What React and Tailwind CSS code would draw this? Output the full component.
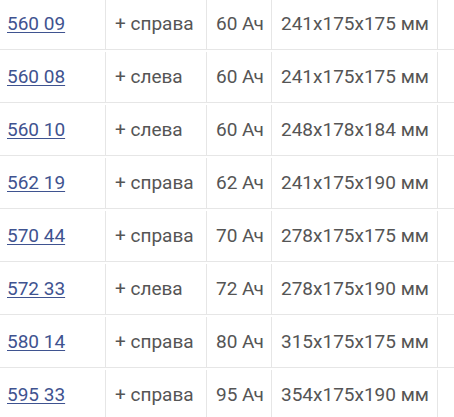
const rows = [
  ['560 09', '+ справа', '60 Ач', '241x175x175 мм'],
  ['560 08', '+ слева', '60 Ач', '241x175x175 мм'],
  ['560 10', '+ слева', '60 Ач', '248x178x184 мм'],
  ['562 19', '+ справа', '62 Ач', '241x175x190 мм'],
  ['570 44', '+ справа', '70 Ач', '278x175x175 мм'],
  ['572 33', '+ слева', '72 Ач', '278x175x190 мм'],
  ['580 14', '+ справа', '80 Ач', '315x175x175 мм'],
  ['595 33', '+ справа', '95 Ач', '354x175x190 мм'],
];

export default function App() {
  return (
    <div className="bg-white w-[454px] h-[417px] overflow-hidden font-['Roboto',sans-serif] text-[19px] text-[#555]">
      <div className="-mt-[3px]">
        {rows.map((r) => (
          <div key={r[0]} className="flex h-[53px] pt-[2px] border-b border-[#e6e6e6]">
            <div className="w-[106px] shrink-0 border-r border-[#e6e6e6] pl-[7px] flex items-center">
              <a href="#" className="text-[#3f5390] underline underline-offset-[2px] decoration-1">
                {r[0]}
              </a>
            </div>
            <div className="w-[101px] shrink-0 border-r border-[#e6e6e6] pl-[9px] flex items-center">
              {r[1]}
            </div>
            <div className="w-[65px] shrink-0 border-r border-[#e6e6e6] pl-[9px] flex items-center">
              {r[2]}
            </div>
            <div className="w-[166px] shrink-0 border-r border-[#e6e6e6] pl-[9px] flex items-center whitespace-nowrap">
              {r[3]}
            </div>
            <div className="flex-1" />
          </div>
        ))}
      </div>
    </div>
  );
}
